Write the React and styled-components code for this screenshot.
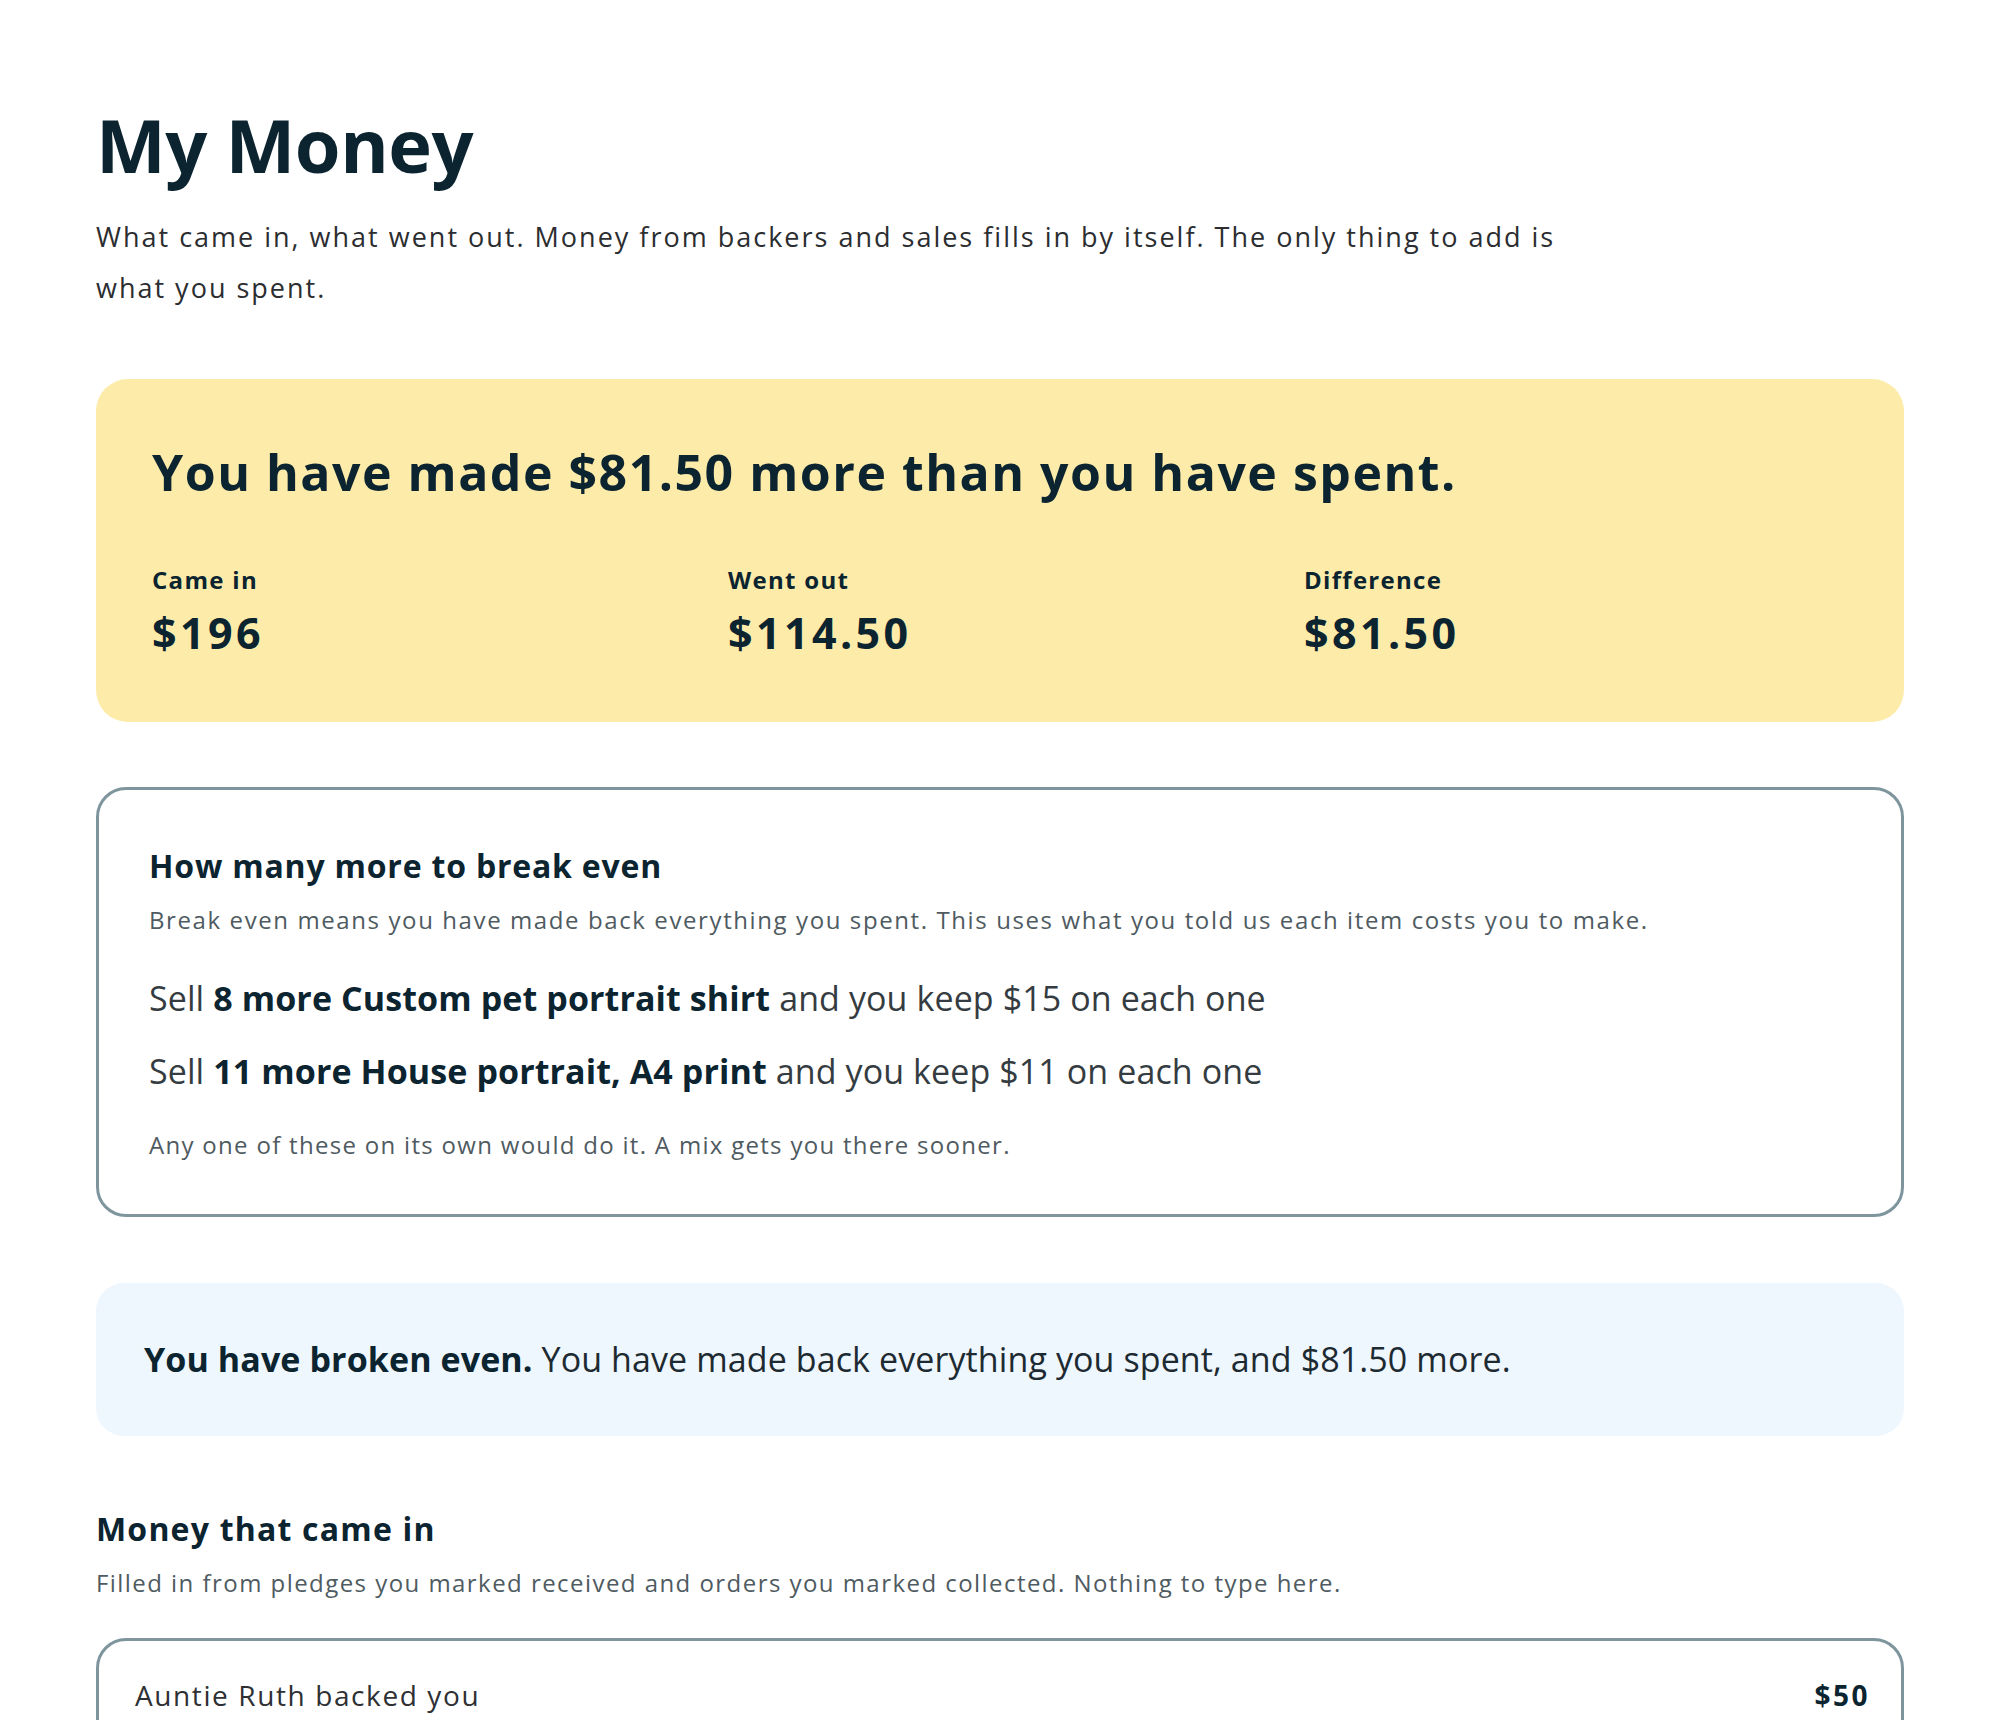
import styled, { createGlobalStyle } from "styled-components";

const GlobalStyle = createGlobalStyle`
  html, body {
    margin: 0;
    padding: 0;
    background: #ffffff;
  }
  body {
    font-family: "Open Sans", "Noto Sans", "Liberation Sans", sans-serif;
    color: #0b2430;
  }
`;

const incoming = [{ id: 1, label: "Auntie Ruth backed you", amount: "$50" }];

const breakEven = [
  { id: 1, count: 8, item: "Custom pet portrait shirt", keep: "$15" },
  { id: 2, count: 11, item: "House portrait, A4 print", keep: "$11" },
];

const totals = [
  { id: "in", label: "Came in", value: "$196" },
  { id: "out", label: "Went out", value: "$114.50" },
  { id: "diff", label: "Difference", value: "$81.50" },
];

export default function App() {
  return (
    <>
      <GlobalStyle />
      <Page>
        <Title>My Money</Title>
        <Intro>
          What came in, what went out. Money from backers and sales fills in by
          itself. The only thing to add is what you spent.
        </Intro>

        <SummaryCard>
          <SummaryHeadline>
            You have made $81.50 more than you have spent.
          </SummaryHeadline>
          <StatGrid>
            {totals.map((t) => (
              <Stat key={t.id}>
                <StatLabel>{t.label}</StatLabel>
                <StatValue>{t.value}</StatValue>
              </Stat>
            ))}
          </StatGrid>
        </SummaryCard>

        <OutlineCard>
          <CardTitle>How many more to break even</CardTitle>
          <CardNote>
            Break even means you have made back everything you spent. This uses
            what you told us each item costs you to make.
          </CardNote>
          <SellList>
            {breakEven.map((row) => (
              <SellLine key={row.id}>
                Sell{" "}
                <strong>
                  {row.count} more {row.item}
                </strong>{" "}
                and you keep {row.keep} on each one
              </SellLine>
            ))}
          </SellList>
          <CardFoot>
            Any one of these on its own would do it. A mix gets you there
            sooner.
          </CardFoot>
        </OutlineCard>

        <InfoBanner>
          <strong>You have broken even.</strong> You have made back everything
          you spent, and $81.50 more.
        </InfoBanner>

        <Section>
          <SectionTitle>Money that came in</SectionTitle>
          <SectionNote>
            Filled in from pledges you marked received and orders you marked
            collected. Nothing to type here.
          </SectionNote>
          <LedgerBox>
            {incoming.map((row) => (
              <LedgerRow key={row.id}>
                <LedgerLabel>{row.label}</LedgerLabel>
                <LedgerAmount>{row.amount}</LedgerAmount>
              </LedgerRow>
            ))}
          </LedgerBox>
        </Section>
      </Page>
    </>
  );
}

const Page = styled.main`
  padding: 101px 96px 80px 96px;
  display: flex;
  flex-direction: column;
`;

const Title = styled.h1`
  margin: 0;
  font-size: 74px;
  line-height: 1.2;
  font-weight: 700;
  letter-spacing: -0.5px;
  color: #0b2430;
`;

const Intro = styled.p`
  margin: 21px 0 0 0;
  max-width: 1500px;
  font-size: 27px;
  line-height: 51px;
  letter-spacing: 2px;
  color: #2b2d30;
`;

const SummaryCard = styled.section`
  margin-top: 66px;
  background: #fdeca9;
  border-radius: 32px;
  padding: 61px 56px 63px 56px;
`;

const SummaryHeadline = styled.h2`
  margin: 0;
  font-size: 50px;
  line-height: 1.3;
  font-weight: 700;
  letter-spacing: 1.5px;
  color: #0b2430;
`;

const StatGrid = styled.div`
  display: grid;
  grid-template-columns: repeat(3, 1fr);
  gap: 32px;
  margin-top: 59px;
`;

const Stat = styled.div`
  display: flex;
  flex-direction: column;
  gap: 12px;
`;

const StatLabel = styled.div`
  font-size: 24px;
  line-height: 1.3;
  font-weight: 700;
  letter-spacing: 1.3px;
  color: #0b2430;
`;

const StatValue = styled.div`
  font-size: 43px;
  line-height: 1.2;
  font-weight: 700;
  letter-spacing: 3.4px;
  color: #0b2430;
`;

const OutlineCard = styled.section`
  margin-top: 65px;
  border: 3px solid #7f959d;
  border-radius: 30px;
  padding: 55px 50px 51px 50px;
`;

const CardTitle = styled.h3`
  margin: 0;
  font-size: 32px;
  line-height: 1.3;
  font-weight: 700;
  letter-spacing: 0.8px;
  color: #0b2430;
`;

const CardNote = styled.p`
  margin: 16px 0 0 0;
  font-size: 24px;
  line-height: 36px;
  letter-spacing: 1.6px;
  color: #4f5b61;
`;

const SellList = styled.div`
  display: flex;
  flex-direction: column;
  gap: 22px;
  margin-top: 35px;
`;

const SellLine = styled.p`
  margin: 0;
  font-size: 34px;
  line-height: 51px;
  letter-spacing: 0.1px;
  color: #353c41;

  strong {
    font-weight: 700;
    color: #0b2430;
  }
`;

const CardFoot = styled.p`
  margin: 30px 0 0 0;
  font-size: 24px;
  line-height: 36px;
  letter-spacing: 1.3px;
  color: #4f5b61;
`;

const InfoBanner = styled.p`
  margin: 66px 0 0 0;
  background: #eef6fe;
  border-radius: 28px;
  padding: 51px 48px;
  font-size: 34px;
  line-height: 51px;
  letter-spacing: 0.1px;
  color: #1d2a31;

  strong {
    font-weight: 700;
    color: #0b2430;
  }
`;

const Section = styled.section`
  margin-top: 72px;
  display: flex;
  flex-direction: column;
`;

const SectionTitle = styled.h3`
  margin: 0;
  font-size: 32px;
  line-height: 1.3;
  font-weight: 700;
  letter-spacing: 1.2px;
  color: #0b2430;
`;

const SectionNote = styled.p`
  margin: 15px 0 0 0;
  font-size: 24px;
  line-height: 36px;
  letter-spacing: 1.45px;
  color: #4f5b61;
`;

const LedgerBox = styled.div`
  margin-top: 37px;
  border: 3px solid #7f959d;
  border-radius: 30px;
  padding: 33px 31px 33px 36px;
`;

const LedgerRow = styled.div`
  display: flex;
  justify-content: space-between;
  align-items: baseline;
`;

const LedgerLabel = styled.span`
  font-size: 28px;
  line-height: 42px;
  letter-spacing: 1.6px;
  color: #2e3033;
`;

const LedgerAmount = styled.span`
  font-size: 28px;
  line-height: 42px;
  font-weight: 700;
  letter-spacing: 2.5px;
  color: #0b2430;
`;
